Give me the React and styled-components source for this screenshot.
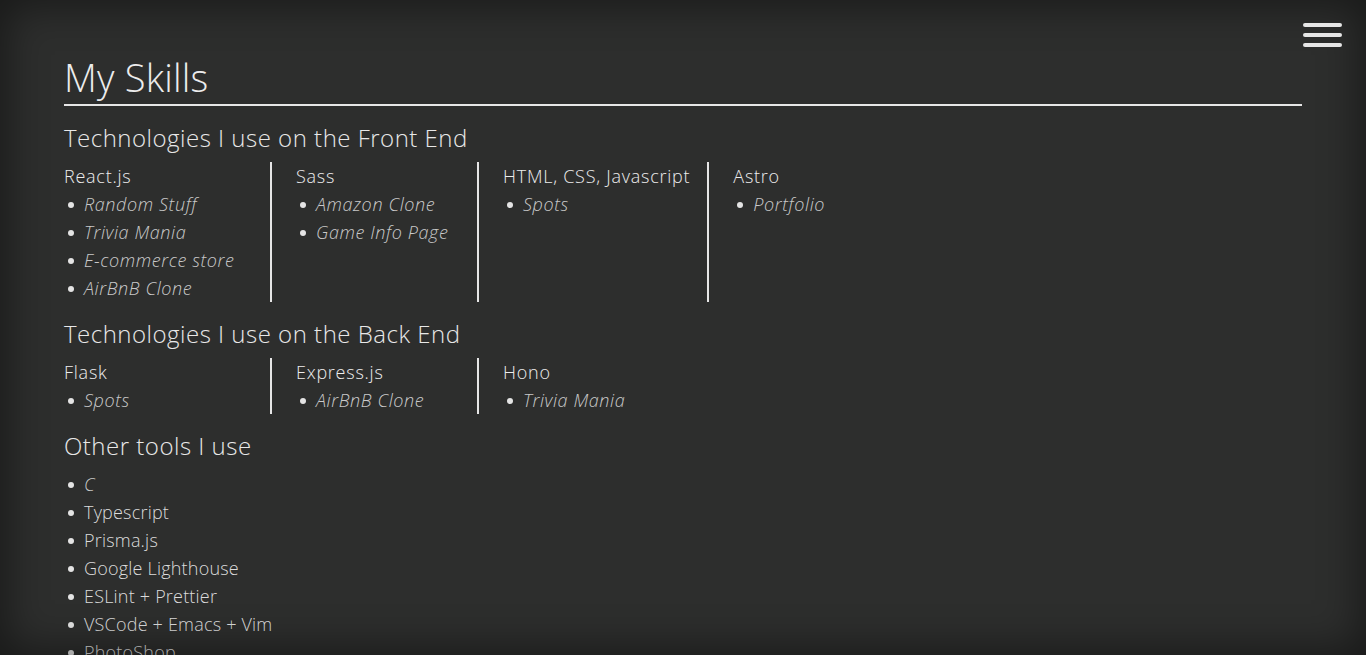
import React from "react";
import styled, { createGlobalStyle } from "styled-components";

const GlobalStyle = createGlobalStyle`
  html, body {
    margin: 0;
    padding: 0;
    background: #2d2e2d;
    color: #e4e4e4;
    font-family: "Open Sans", "Noto Sans", sans-serif;
    font-weight: 300;
  }
  * { box-sizing: border-box; }
`;

const Vignette = styled.div`
  position: fixed;
  inset: 0;
  pointer-events: none;
  box-shadow: inset 0 0 40px 6px rgba(0, 0, 0, 0.45);
  z-index: 5;
`;

const Burger = styled.button`
  position: fixed;
  top: 21px;
  right: 23px;
  width: 41px;
  height: 28px;
  padding: 2px 1px;
  border: none;
  background: transparent;
  display: flex;
  flex-direction: column;
  justify-content: space-between;
  cursor: pointer;
  z-index: 6;
`;

const Bar = styled.span`
  display: block;
  height: 4px;
  border-radius: 2px;
  background: #e6e6e6;
`;

const Main = styled.main`
  padding: 50px 64px 40px;
`;

const Title = styled.h1`
  margin: 0;
  font-size: 38px;
  font-weight: 300;
  line-height: 54px;
  letter-spacing: 0.2px;
  border-bottom: 2px solid #e6e6e6;
  color: #ececec;
`;

const Section = styled.section`
  margin-top: ${(p) => p.$top}px;
`;

const SectionTitle = styled.h2`
  margin: 0 0 8px;
  font-size: 24px;
  font-weight: 300;
  line-height: 32px;
  letter-spacing: 0.5px;
  color: #e8e8e8;
`;

const Columns = styled.div`
  display: flex;
  align-items: stretch;
`;

const Column = styled.div`
  min-width: ${(p) => p.$min || 0}px;
  padding: 0 17px 0 24px;
  border-left: 2px solid #e6e6e6;
  &:first-child {
    padding-left: 0;
    border-left: none;
  }
`;

const ColumnTitle = styled.h3`
  margin: 0;
  font-size: 18px;
  font-weight: 300;
  line-height: 28px;
  letter-spacing: 0.75px;
  color: #ededed;
`;

const List = styled.ul`
  margin: 0;
  padding: 0 0 0 20px;
  list-style: none;
`;

const Item = styled.li`
  position: relative;
  font-size: 18px;
  line-height: 28px;
  color: ${(p) => (p.$italic ? "#c9c9c9" : "#dcdcdc")};
  font-style: ${(p) => (p.$italic ? "italic" : "normal")};
  letter-spacing: ${(p) => (p.$italic ? "0.6px" : "0.2px")};
  &::before {
    content: "";
    position: absolute;
    left: -16px;
    top: 12px;
    width: 6px;
    height: 6px;
    border-radius: 50%;
    background: #e4e4e4;
  }
`;

const frontEnd = [
  { name: "React.js", min: 206, items: ["Random Stuff", "Trivia Mania", "E-commerce store", "AirBnB Clone"] },
  { name: "Sass", min: 207, items: ["Amazon Clone", "Game Info Page"] },
  { name: "HTML, CSS, Javascript", min: 0, items: ["Spots"] },
  { name: "Astro", min: 0, items: ["Portfolio"] },
];

const backEnd = [
  { name: "Flask", min: 206, items: ["Spots"] },
  { name: "Express.js", min: 207, items: ["AirBnB Clone"] },
  { name: "Hono", min: 0, items: ["Trivia Mania"] },
];

const tools = [
  { label: "C", italic: true },
  { label: "Typescript" },
  { label: "Prisma.js" },
  { label: "Google Lighthouse" },
  { label: "ESLint + Prettier" },
  { label: "VSCode + Emacs + Vim" },
  { label: "PhotoShop" },
  { label: "Figma" },
];

function TechColumns({ data }) {
  return (
    <Columns>
      {data.map((col) => (
        <Column key={col.name} $min={col.min}>
          <ColumnTitle>{col.name}</ColumnTitle>
          <List>
            {col.items.map((it) => (
              <Item key={it} $italic>
                {it}
              </Item>
            ))}
          </List>
        </Column>
      ))}
    </Columns>
  );
}

export default function App() {
  return (
    <>
      <GlobalStyle />
      <Vignette />
      <Burger aria-label="menu">
        <Bar />
        <Bar />
        <Bar />
      </Burger>
      <Main>
        <Title>My Skills</Title>
        <Section $top={16}>
          <SectionTitle>Technologies I use on the Front End</SectionTitle>
          <TechColumns data={frontEnd} />
        </Section>
        <Section $top={16}>
          <SectionTitle>Technologies I use on the Back End</SectionTitle>
          <TechColumns data={backEnd} />
        </Section>
        <Section $top={16}>
          <SectionTitle>Other tools I use</SectionTitle>
          <List>
            {tools.map((t) => (
              <Item key={t.label} $italic={t.italic}>
                {t.label}
              </Item>
            ))}
          </List>
        </Section>
      </Main>
    </>
  );
}
